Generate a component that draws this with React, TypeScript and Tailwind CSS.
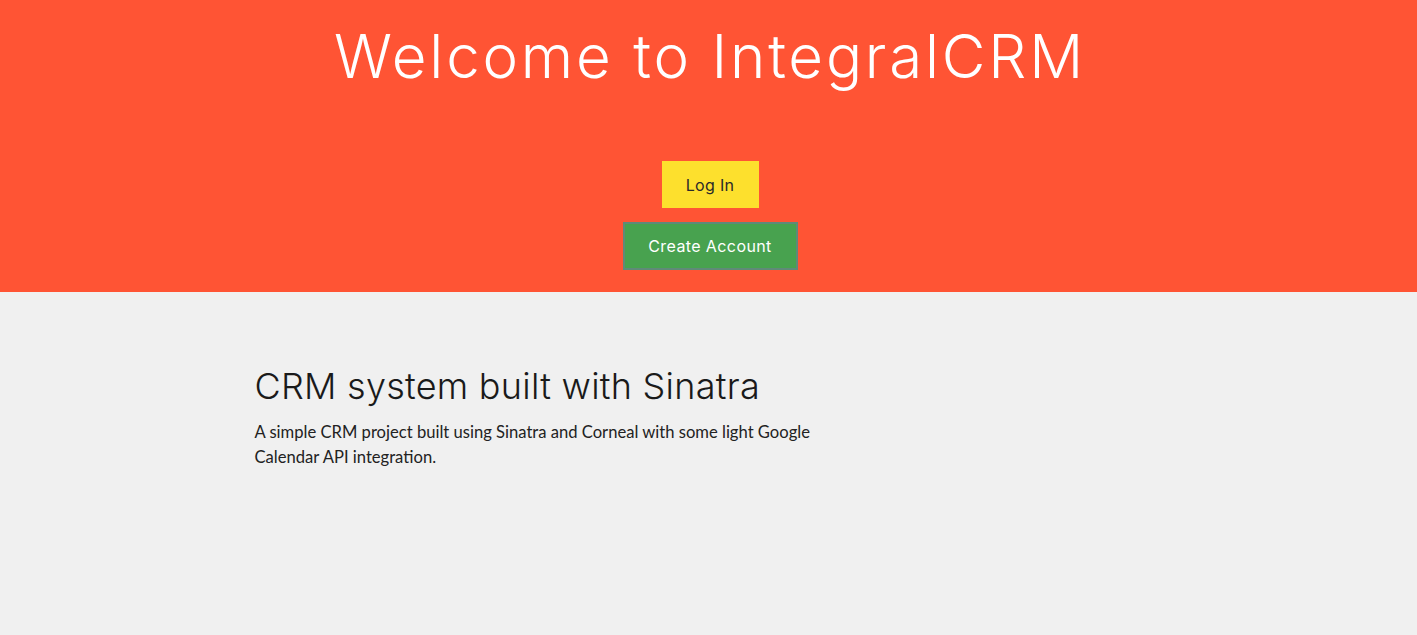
export default function App() {
  return (
    <div className="min-h-screen bg-[#f0f0f0]">
      <header className="flex h-[292px] flex-col items-center bg-[#ff5434] pl-[3px] font-['Inter',sans-serif]">
        <h1 className="mt-[20px] text-[60px] font-light leading-[72px] tracking-[2.8px] text-white">
          Welcome to IntegralCRM
        </h1>
        <div className="mt-[69px] flex flex-col items-center gap-[14px]">
          <button className="h-[47px] w-[97px] bg-[#fde02d] text-[16px] tracking-[0.3px] text-[#2a2a2a]">Log In</button>
          <button className="h-[48px] w-[175px] border-2 border-[#5f8a78] bg-[#48a24f] text-[16px] tracking-[0.4px] text-white">
            Create Account
          </button>
        </div>
      </header>
      <section className="mx-auto w-[908px] pt-[70px]">
        <h2 className="font-['Inter',sans-serif] text-[36px] font-light leading-[48px] tracking-[0.25px] text-[#1a1a1a]">
          CRM system built with Sinatra
        </h2>
        <p className="mt-[10px] max-w-[590px] font-['Lato',sans-serif] text-[16.6px] leading-[25px] text-[#222]">
          A simple CRM project built using Sinatra and Corneal with some light Google Calendar API integration.
        </p>
      </section>
    </div>
  );
}
